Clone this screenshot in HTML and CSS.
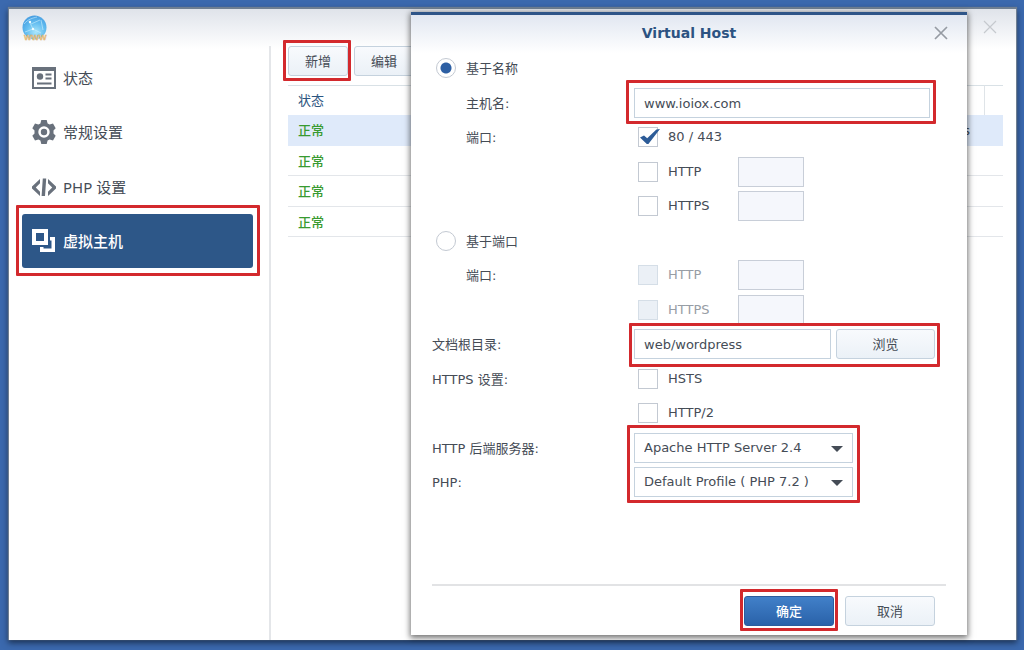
FILE: index.html
```html
<!DOCTYPE html>
<html lang="zh-CN">
<head>
<meta charset="utf-8">
<title>Virtual Host</title>
<link rel="stylesheet" href="styles.css">
</head>
<body>
<div class="window">
  <header class="window-bar">
    <svg class="logo" viewBox="0 0 26 26" role="img" aria-label="Web Station">
      <defs>
        <radialGradient id="globe" cx="0.55" cy="0.7" r="0.8">
          <stop offset="0" stop-color="#a9e6fb"/>
          <stop offset="0.5" stop-color="#63bdf0"/>
          <stop offset="1" stop-color="#3d93dc"/>
        </radialGradient>
      </defs>
      <circle cx="12.5" cy="12.5" r="12" fill="url(#globe)"/>
      <path d="M2 9c4-5 9-6 13-7M7 6l4 8 8 4M11 14l-8 3M9 9l9-4M19 5l2 10" fill="none" stroke="#d8f5ff" stroke-width="0.9" opacity="0.6"/>
      <circle cx="8" cy="7" r="1.2" fill="#f3fcff"/>
      <circle cx="11" cy="14" r="1.2" fill="#f3fcff"/>
      <text x="2" y="25" class="logo-text">WWW</text>
    </svg>
    <button class="close close-window" aria-label="关闭窗口"><svg viewBox="0 0 14 14"><path d="M1 1l12 12M13 1L1 13"/></svg></button>
  </header>

  <div class="columns">
    <nav class="sidebar">
      <a class="nav-item tall" href="#">
        <svg viewBox="0 0 24 24"><path fill-rule="evenodd" d="M0 1h24v22H0zM2 5v16h20V5z"/><circle cx="8" cy="10.5" r="3.2"/><path d="M13.5 7.5h6v2h-6zM13.5 11.5h6v2h-6zM5 16.5h14.5v2H5z"/></svg>
        状态</a>
      <a class="nav-item" href="#">
        <svg viewBox="0 0 24 24"><path fill-rule="evenodd" d="M9.3 0h5.4l.9 3.4 2 1.1 3.4-.9 2.7 4.6-2.2 2.4v2.8l2.2 2.4-2.7 4.6-3.4-.9-2 1.100-.9 3.400H9.300l-.9-3.400-2-1.100-3.400.9L.3 15.800l2.200-2.400v-2.800L.3 8.200 3 3.600l3.400.9 2-1.100zM12 6.300a5.700 5.700 0 1 0 0 11.400 5.700 5.700 0 0 0 0-11.400zm0 2.500a3.200 3.200 0 1 1 0 6.400 3.200 3.200 0 0 1 0-6.400z"/></svg>
        常规设置</a>
      <a class="nav-item tall" href="#">
        <svg viewBox="0 0 24 24"><path d="M8 4v4.300L3.800 12.500 8 16.700V21L0 13.600v-2.200zM16 4v4.300l4.200 4.200-4.200 4.200V21l8-7.400v-2.200zM10.800 3.500h3.400l-1.200 17.500H9.600z"/></svg>
        PHP 设置</a>
      <a class="nav-item selected marked mark-nav" href="#">
        <svg viewBox="0 0 24 24"><path fill-rule="evenodd" d="M0 0h16v16H0zM4 4v8h8V4zM18 8h5v15H8v-5h3.500v1.500h8V11.500H18z"/></svg>
        虚拟主机</a>
    </nav>

    <main class="content">
      <div class="toolbar">
        <span class="marked mark-add"><button class="button">新增</button></span>
        <button class="button">编辑</button>
      </div>
      <table class="hosts">
        <thead><tr><th>状态</th><th class="detail"></th><th class="tail"></th></tr></thead>
        <tbody>
          <tr class="current"><td>正常</td><td class="detail">s</td><td></td></tr>
          <tr><td>正常</td><td></td><td></td></tr>
          <tr><td>正常</td><td></td><td></td></tr>
          <tr><td>正常</td><td></td><td></td></tr>
        </tbody>
      </table>
    </main>
  </div>

  <form class="dialog" role="dialog" aria-labelledby="dialog-title">
    <header class="dialog-bar">
      <h1 id="dialog-title">Virtual Host</h1>
      <button type="button" class="close" aria-label="关闭"><svg viewBox="0 0 14 14"><path d="M1 1l12 12M13 1L1 13"/></svg></button>
    </header>

    <div class="fields">
      <div class="row tall"><div class="choice"><input type="radio" name="mode" id="by-name" checked><label for="by-name">基于名称</label></div></div>
      <div class="row"><label class="indent" for="hostname">主机名:</label>
        <div class="marked mark-host"><input class="text host" type="text" id="hostname" value="www.ioiox.com"></div></div>
      <div class="row tall"><span class="indent">端口:</span>
        <div class="choice"><input type="checkbox" id="std" checked><label for="std">80 / 443</label></div></div>
      <div class="row"><span></span>
        <div class="choice"><input type="checkbox" id="n-http"><label class="protocol" for="n-http">HTTP</label><input class="text port" type="text" aria-label="HTTP 端口" disabled></div></div>
      <div class="row tall"><span></span>
        <div class="choice"><input type="checkbox" id="n-https"><label class="protocol" for="n-https">HTTPS</label><input class="text port" type="text" aria-label="HTTPS 端口" disabled></div></div>
      <div class="row"><div class="choice"><input type="radio" name="mode" id="by-port"><label for="by-port">基于端口</label></div></div>
      <div class="row tall"><span class="indent">端口:</span>
        <div class="choice"><input type="checkbox" id="p-http" disabled><label class="protocol" for="p-http">HTTP</label><input class="text port" type="text" aria-label="HTTP 端口" disabled></div></div>
      <div class="row"><span></span>
        <div class="choice"><input type="checkbox" id="p-https" disabled><label class="protocol" for="p-https">HTTPS</label><input class="text port" type="text" aria-label="HTTPS 端口" disabled></div></div>
      <div class="row tall"><label for="root">文档根目录:</label>
        <div class="browse marked mark-root"><input class="text" type="text" id="root" value="web/wordpress"><button type="button" class="button">浏览</button></div></div>
      <div class="row"><span>HTTPS 设置:</span>
        <div class="choice"><input type="checkbox" id="hsts"><label for="hsts">HSTS</label></div></div>
      <div class="row tall"><span></span>
        <div class="choice"><input type="checkbox" id="http2"><label for="http2">HTTP/2</label></div></div>
      <div class="marked mark-backend">
        <div class="row"><label for="backend">HTTP 后端服务器:</label>
          <div class="picker"><select id="backend"><option>Apache HTTP Server 2.4</option></select><svg viewBox="0 0 12 6"><path d="M0 0h12L6 6z"/></svg></div></div>
        <div class="row tall"><label for="php">PHP:</label>
          <div class="picker"><select id="php"><option>Default Profile ( PHP 7.2 )</option></select><svg viewBox="0 0 12 6"><path d="M0 0h12L6 6z"/></svg></div></div>
      </div>
    </div>

    <footer class="actions">
      <span class="marked mark-ok"><button type="button" class="button primary">确定</button></span>
      <button type="button" class="button">取消</button>
    </footer>
  </form>
</div>
</body>
</html>
```
FILE: styles.css
```css
*, *::after { box-sizing: border-box; }

body {
  margin: 0;
  min-height: 100vh;
  display: flex;
  padding: 9px 8px 10px 9px;
  background: #3b69ae;
  color: #454c56;
  font: 13px/30px "DejaVu Sans", "Noto Sans CJK SC", sans-serif;
}

button, input, select { font: inherit; color: inherit; margin: 0; }

.window {
  position: relative;
  flex: 1;
  display: flex;
  flex-direction: column;
  background: linear-gradient(#dfe3ea, #fff 40px);
  box-shadow: 0 -1px 1px 1px #6f7f92, 0 2px 6px 1px #1c3354;
}

.window-bar {
  display: flex;
  justify-content: space-between;
  padding: 6px 19px 0 13px;
  height: 37px;
}
.logo { width: 26px; height: 26px; }
.logo-text {
  font: bold 8px "Liberation Sans", sans-serif;
  fill: #f3cb84;
  stroke: #d3a568;
  stroke-width: 0.3px;
}

.close { border: 0; padding: 0; background: none; width: 14px; height: 14px; line-height: 0; }
.close svg { width: 14px; height: 14px; fill: none; stroke: #969ba3; stroke-width: 1.7; }
.close-window { margin-top: 5px; }
.close-window svg { stroke: #c6c9ce; stroke-width: 1.2; }

.columns { flex: 1; display: flex; }

.sidebar {
  width: 262px;
  padding: 4px 16px 0 13px;
  border-right: 2px solid #e4e6e9;
}
.nav-item {
  display: flex;
  align-items: center;
  gap: 7px;
  height: 54px;
  padding-left: 10px;
  border-radius: 3px;
  color: #454c56;
  font: 15px/22px "Noto Sans", "Noto Sans CJK SC", sans-serif;
  text-decoration: none;
}
.nav-item.tall { height: 55px; }
.nav-item svg { width: 24px; height: 24px; fill: #69717c; }
.nav-item.selected { background: #2d5788; color: #fff; font-weight: 500; }
.nav-item.selected svg { fill: #fff; }

.content { flex: 1; padding: 0 13px 0 17px; }
.toolbar { display: flex; gap: 6px; }

.button {
  width: 60px;
  height: 30px;
  padding: 2px 0 0;
  border: 1px solid #c5d2de;
  border-radius: 3px;
  background: linear-gradient(#f8fafd, #ebf1f7);
  line-height: 26px;
}
.toolbar .marked { height: 30px; display: flex; }

/* Red call-out frames drawn over the controls they surround */
.marked { position: relative; }
.marked::after {
  content: "";
  position: absolute;
  border: 3px solid #d3292d;
  border-radius: 1px;
  pointer-events: none;
}
.mark-nav::after { inset: -9px -7px -8px -6px; }
.mark-add::after { inset: -6px -3px -5px -5px; }
.mark-host::after { inset: -8px -6px -6px -8px; }
.mark-root::after { inset: -6px -5px -8px -5px; }
.mark-backend::after { inset: -6px auto -3px 195px; width: 233px; }
.mark-ok::after { inset: -7px -4px -5px -4px; }

.hosts {
  width: 100%;
  margin-top: 9px;
  border-collapse: separate;
  border-spacing: 0;
  table-layout: fixed;
}
.hosts th {
  height: 30px;
  padding: 0 10px;
  border-top: 1px solid #d9e1e6;
  color: #2c5580;
  font-weight: 400;
  line-height: 20px;
  text-align: left;
}
.hosts td {
  height: 31px;
  padding: 2px 10px 0;
  border-bottom: 1px solid #e3e6ea;
  color: #389a30;
  font-weight: 500;
  line-height: 20px;
}
.hosts tr:nth-child(even) td { height: 30px; }
.hosts .current td { background: #dfeafa; border-color: #dfeafa; }
.hosts .detail { padding: 0 14px; text-align: right; border-right: 1px solid #dfe4e8; }
.hosts td.detail { padding-top: 2px; color: #454c56; font-weight: 400; border-right-color: #dfeafa; }
.hosts .tail { width: 18px; padding: 0; }

.dialog {
  position: absolute;
  top: 3px;
  right: 49px;
  bottom: 5px;
  width: 556px;
  display: flex;
  flex-direction: column;
  border-top: 3px solid #2e5588;
  background: linear-gradient(#e1e7f1, #fff 38px);
  box-shadow: 0 2px 6px 1px rgba(0, 0, 0, 0.55);
}
.dialog-bar {
  display: grid;
  grid-template-columns: 14px 1fr 14px;
  align-items: center;
  height: 36px;
  padding: 0 19px;
}
.dialog-bar h1 {
  grid-column: 2;
  margin: 0;
  color: #2c5382;
  font-size: 14px;
  font-weight: 700;
  line-height: 20px;
  text-align: center;
}

.fields { padding: 0 21px; }
.row {
  display: grid;
  grid-template-columns: 202px 1fr;
  height: 34px;
  padding-top: 2px;
  justify-items: start;
  align-items: start;
}
.row.tall { height: 35px; }
.row > *, .row .marked { height: 30px; }
.row > label, .row > span { line-height: 32px; }
.indent { padding-left: 34px; }

.choice { display: flex; align-items: center; gap: 10px; padding-left: 4px; }
.protocol { width: 60px; }
.choice input[type="radio"], .choice input[type="checkbox"] {
  appearance: none;
  position: relative;
  flex: none;
  width: 20px;
  height: 20px;
  border: 1px solid #c3c9d2;
  background: #fff;
}
.choice input[type="radio"] { border-radius: 50%; }
.choice input[type="radio"] + label { line-height: 32px; height: 30px; }
.choice input[type="radio"]:checked {
  background: radial-gradient(circle, #2d5fa3 5px, #fff 6px);
}
.choice input[type="checkbox"]:checked::after {
  content: "";
  position: absolute;
  left: 1px;
  top: 1px;
  width: 20px;
  height: 15px;
  background: #2d5c98;
  clip-path: polygon(0 56%, 20% 44%, 36% 62%, 82% 4%, 100% 0, 42% 100%, 34% 100%);
}
.choice input[type="checkbox"]:disabled { background: #ebf0f6; border-color: #d5dee7; }
.choice input:disabled + label { color: #979da5; }

.text, .picker select {
  display: block;
  height: 30px;
  padding: 2px 9px 0;
  border: 1px solid #c5d2de;
  border-radius: 0;
  background: #fff;
  outline: 0;
}
.host { width: 296px; }
.port { width: 66px; background: #f5f7fc; border-color: #c8ced8; }
.browse { display: flex; gap: 5px; }
.browse .text { width: 197px; }
.browse .button { width: 99px; }

.picker { position: relative; }
.picker select { width: 219px; padding-top: 0; appearance: none; line-height: 28px; }
.picker svg {
  position: absolute;
  right: 10px;
  top: 13px;
  width: 12px;
  height: 6px;
  fill: #454c56;
  pointer-events: none;
}

.actions {
  display: flex;
  justify-content: flex-end;
  gap: 11px;
  margin: auto 21px 9px;
  padding: 10px 11px 0 0;
  border-top: 2px solid #e2e3e5;
}
.actions .marked { display: flex; }
.actions .button { width: 90px; }
.actions .primary {
  border-color: #2b5c9c;
  background: linear-gradient(#4180c9, #2a62a9);
  color: #fff;
  font-weight: 500;
}
```
